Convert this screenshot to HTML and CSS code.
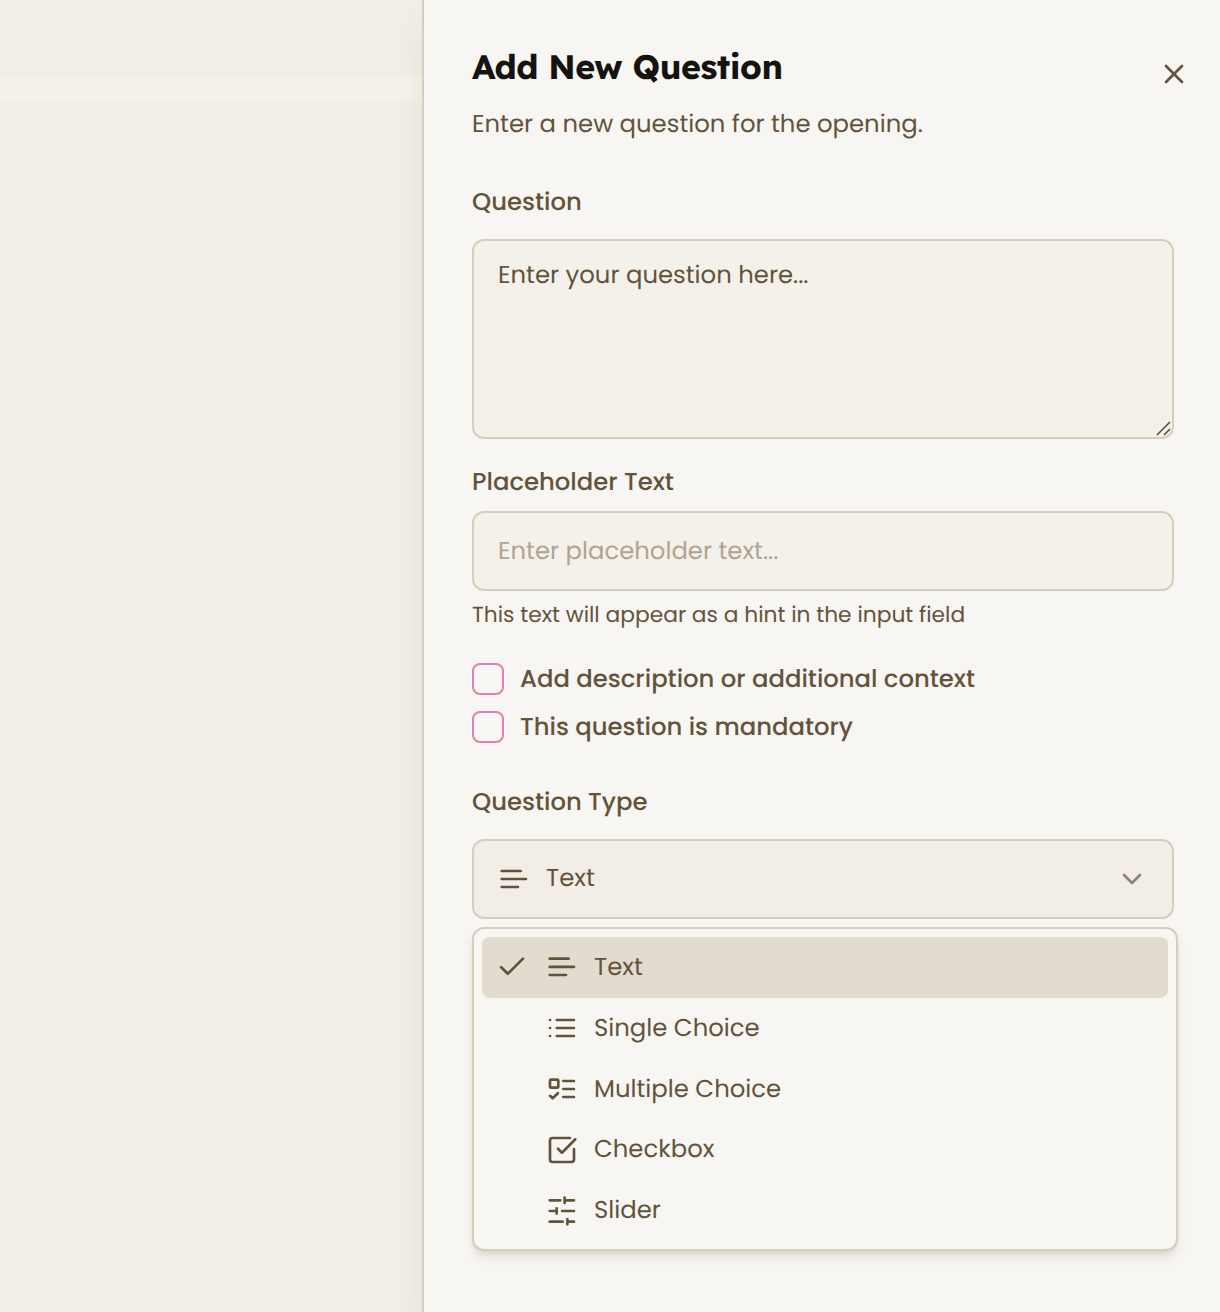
FILE: index.html
```
<!DOCTYPE html>
<html lang="en">
<head>
<meta charset="utf-8">
<title>Add New Question</title>
<link rel="stylesheet" href="styles.css">
</head>
<body>
<div class="page">
  <div class="backdrop"><div class="backdrop-band"></div></div>
  <main class="panel">
    <header class="panel-header">
      <div>
        <h1 class="title">Add New Question</h1>
        <p class="subtitle">Enter a new question for the opening.</p>
      </div>
      <button class="close" aria-label="Close"><svg width="22" height="22" viewBox="0 0 22 22"><path d="M3 3l16 16M19 3L3 19"/></svg></button>
    </header>
    <label class="label label-question">Question</label>
    <div class="textarea">Enter your question here...
      <svg class="grip" width="18" height="18" viewBox="0 0 18 18"><path d="M2 16L15 3M9 16l6-6"/></svg>
    </div>
    <label class="label label-placeholder">Placeholder Text</label>
    <div class="input">Enter placeholder text...</div>
    <p class="hint">This text will appear as a hint in the input field</p>
    <div class="checks">
      <label class="check-row"><span class="box"></span><span>Add description or additional context</span></label>
      <label class="check-row"><span class="box"></span><span>This question is mandatory</span></label>
    </div>
    <label class="label label-type">Question Type</label>
    <div class="select">
      <svg width="32" height="32" viewBox="0 0 32 32"><path d="M3.7 8H22.7M3.7 16H28M3.7 24H20"/></svg>
      <span class="select-value">Text</span>
      <svg class="chevron" width="24" height="24" viewBox="0 0 24 24"><path d="M4 8l8 8 8-8"/></svg>
    </div>
    <ul class="menu">
      <li class="item selected">
        <svg class="tick" width="32" height="32" viewBox="0 0 32 32"><path d="M5.2 16.2l6.6 6.6L27 7.6"/></svg>
        <svg width="32" height="32" viewBox="0 0 32 32"><path d="M3.7 7.7H22.7M3.7 15.9H28M3.7 24H20"/></svg>
        <span>Text</span>
      </li>
      <li class="item">
        <svg width="32" height="32" viewBox="0 0 32 32"><path d="M4 8h.1M4 16h.1M4 24h.1M10.8 8H28M10.8 16H28M10.8 24H28"/></svg>
        <span>Single Choice</span>
      </li>
      <li class="item">
        <svg width="32" height="32" viewBox="0 0 32 32"><rect x="4" y="6.7" width="8.3" height="8" rx="1.2"/><path d="M4 22.8l2.7 2.5 5.2-5.1M17.3 8H28M17.3 16H28M17.3 24H28"/></svg>
        <span>Multiple Choice</span>
      </li>
      <li class="item">
        <svg width="32" height="32" viewBox="0 0 32 32"><path d="M24 4H6.5A2.5 2.5 0 0 0 4 6.5v19A2.5 2.5 0 0 0 6.5 28h19a2.5 2.5 0 0 0 2.5-2.5V15M12 14.7l4 4L29.3 5.3"/></svg>
        <span>Checkbox</span>
      </li>
      <li class="item">
        <svg class="sliders" width="32" height="32" viewBox="0 0 32 32"><path d="M3.7 5.3h10.6M18.6 5.3H28M18.6 2.7V8M3.7 16h7M10.7 13.3v5.3M16.2 16H28M3.7 26.7h13M21.4 26.7H28M21.4 24v5.3"/></svg>
        <span>Slider</span>
      </li>
    </ul>
  </main>
</div>
</body>
</html>
```
FILE: styles.css
```
* { box-sizing: border-box; }
body {
  margin: 0;
  color: #63533b;
  font: 400 24.33px/40px Poppins, Inter, "Open Sans", sans-serif;
  text-rendering: geometricPrecision;
}
h1, p, ul { margin: 0; padding: 0; }
svg { flex: none; fill: none; stroke: #63533b; stroke-width: 2.67; stroke-linecap: round; stroke-linejoin: round; }
.page { display: grid; grid-template-columns: 422px 798px; height: 1312px; overflow: hidden; }
.backdrop { padding-top: 76px; background: #f2ede7; }
.backdrop-band { height: 26px; background: #f4f1ea; }
.panel {
  display: flex; flex-direction: column;
  padding: 47px 46px 0 48px;
  border-left: 2px solid #d6cebd;
  background: #f8f6f2;
  box-shadow: 0 20px 30px -6px rgba(99, 98, 75, .13);
}
.panel-header { display: flex; justify-content: space-between; height: 135px; }
.title { color: #15130f; font: 700 34px/40px Lexend, Inter, sans-serif; letter-spacing: -.5px; white-space: nowrap; }
.subtitle { margin-top: 17px; }
.close { width: 22px; height: 22px; margin: 16px -11px 0 0; padding: 0; border: 0; background: none; }
.close svg { display: block; }
.label { font-weight: 500; }
.textarea, .input, .select { border: 2px solid #d6cebd; border-radius: 12px; background: #f4f1ea; padding: 0 24px; }
.textarea { position: relative; height: 200px; margin-top: 17px; padding-top: 14px; }
.grip { position: absolute; right: -1px; bottom: 0; stroke-width: 1.7; stroke-linecap: butt; }
.label-placeholder { margin-top: 23px; }
.input { display: flex; align-items: center; height: 80px; margin-top: 9px; padding-bottom: 1px; color: #b0a493; }
.hint { margin-top: 4px; font-size: 21.78px; }
.checks { display: grid; gap: 8px; margin-top: 24px; }
.check-row { display: flex; align-items: center; gap: 16px; font-weight: 500; }
.box { width: 32px; height: 32px; border: 2px solid #e67eb3; border-radius: 8px; }
.label-type { margin-top: 35px; }
.select { display: flex; align-items: center; gap: 16px; height: 80px; margin-top: 17px; background: #f2ede7; }
.select-value { flex: 1; padding-bottom: 2px; }
.chevron { margin-right: 4px; stroke: #8f856e; }
.menu {
  margin: 8px -4px 0 0; padding: 8px; height: 324px;
  border: 2px solid #d6cebd; border-radius: 12px; background: #f8f6f2;
  box-shadow: 0 8px 12px -2px rgba(99, 83, 40, .12), 0 4px 8px -4px rgba(99, 83, 40, .2);
  list-style: none;
}
.item { display: flex; align-items: center; gap: 16px; height: 60.75px; padding-left: 64px; border-radius: 8px; }
.item span { padding-bottom: .5px; }
.selected { padding-left: 14px; background: #e2dbcf; }
.tick { margin-right: 2px; }
.sliders { margin-top: 1px; }
```
